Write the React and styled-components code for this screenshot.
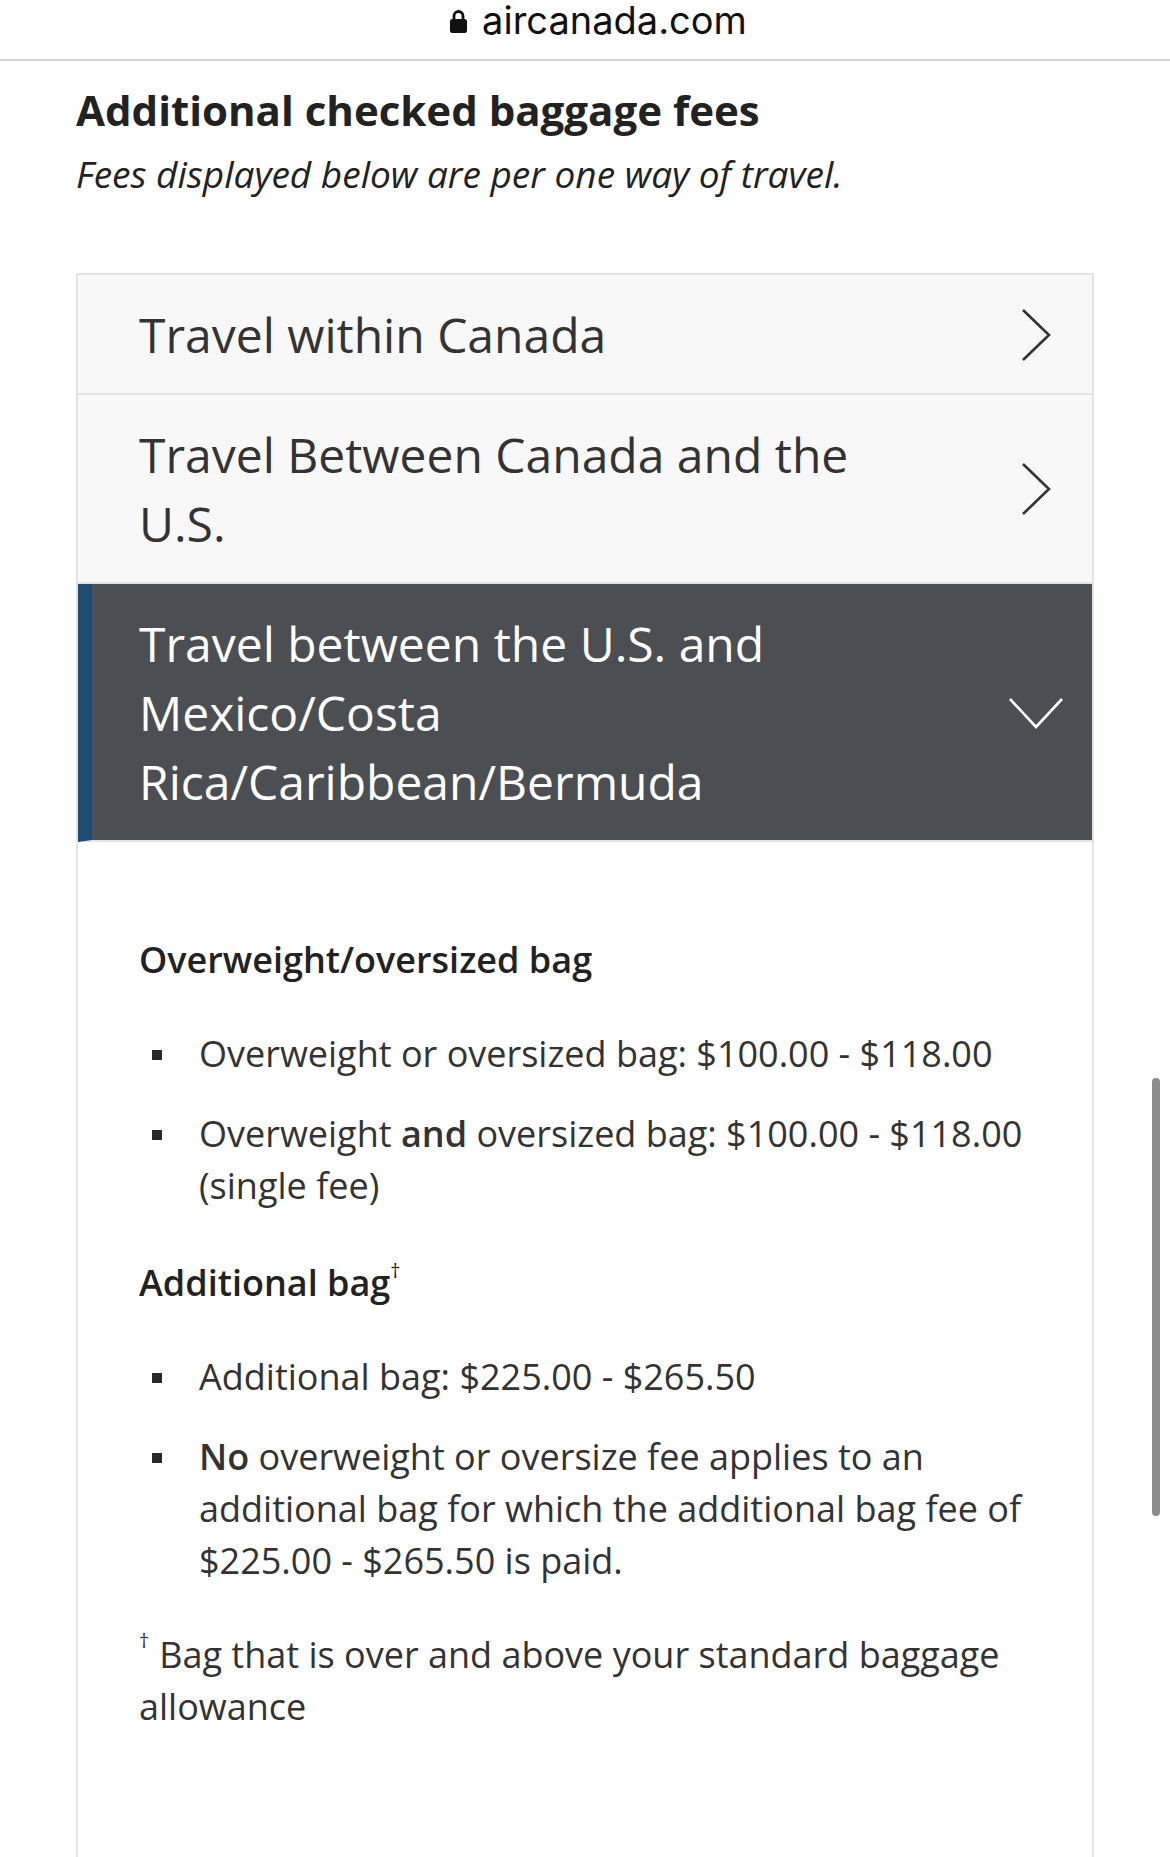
import styled, { createGlobalStyle } from 'styled-components';

const GlobalStyle = createGlobalStyle`
  html, body {
    margin: 0;
    padding: 0;
    background: #ffffff;
  }
  body {
    font-family: "Open Sans", "Liberation Sans", sans-serif;
    color: #333333;
  }
  * {
    box-sizing: border-box;
  }
`;

const AddressBar = styled.div`
  height: 61px;
  display: flex;
  justify-content: center;
  align-items: flex-start;
  gap: 14px;
  padding-left: 26px;
  border-bottom: 2px solid #d4d4d4;
  font-family: Inter, "Liberation Sans", sans-serif;
  font-size: 38px;
  line-height: 40px;
  color: #111111;
`;

const Lock = styled.svg`
  width: 19px;
  height: 24px;
  margin-top: 9px;
`;

const Main = styled.main`
  padding: 21px 76px 0 76px;
`;

const Title = styled.h1`
  margin: 0;
  font-size: 42px;
  line-height: 56px;
  font-weight: 700;
  color: #222222;
`;

const Subtitle = styled.p`
  margin: 12px 0 0 0;
  font-size: 37px;
  line-height: 48px;
  font-style: italic;
  color: #222222;
`;

const Accordion = styled.section`
  margin-top: 75px;
  width: 1018px;
  border: 2px solid #e3e3e3;
  border-bottom: none;
`;

const Header = styled.div`
  display: flex;
  align-items: center;
  justify-content: space-between;
  padding: 25px 40px 24px ${(p) => (p.$open ? 47 : 61)}px;
  background: ${(p) => (p.$open ? '#4b4e53' : '#f8f8f8')};
  color: ${(p) => (p.$open ? '#ffffff' : '#333333')};
  border-left: ${(p) => (p.$open ? '14px solid #1f4d72' : 'none')};
  border-bottom: 2px solid #e3e3e3;
`;

const HeaderText = styled.span`
  max-width: 760px;
  font-size: 48px;
  line-height: 69px;
`;

const Chevron = styled.svg`
  flex: none;
  width: ${(p) => (p.$down ? 56 : 32)}px;
  height: ${(p) => (p.$down ? 34 : 54)}px;
  margin-right: ${(p) => (p.$down ? -12 : 0)}px;
`;

const Panel = styled.div`
  background: #ffffff;
  padding: 92px 61px 126px 61px;
`;

const SubHeading = styled.h3`
  margin: 0;
  font-size: 36px;
  line-height: 52px;
  font-weight: 600;
  color: #222222;

  & sup {
    font-size: 20px;
    font-weight: 400;
    line-height: 0;
    vertical-align: 18px;
  }
`;

const List = styled.ul`
  list-style: none;
  margin: 42px 0 ${(p) => p.$after}px 0;
  padding: 0;
  display: flex;
  flex-direction: column;
  gap: 28px;
`;

const Item = styled.li`
  display: flex;
  align-items: flex-start;
  font-size: 36px;
  line-height: 52px;

  &::before {
    content: '';
    flex: none;
    width: 10px;
    height: 10px;
    margin: 22px 37px 0 13px;
    background: #2a2a2a;
  }

  & strong {
    font-weight: 600;
  }
`;

const Footnote = styled.p`
  margin: 0;
  font-size: 36px;
  line-height: 52px;

  & sup {
    font-size: 20px;
    line-height: 0;
    vertical-align: 20px;
    margin-right: 10px;
  }
`;

const Scrollbar = styled.div`
  position: absolute;
  left: 1152px;
  top: 1078px;
  width: 8px;
  height: 438px;
  border-radius: 4px;
  background: #8c8c8c;
`;

const sections = [
  { title: 'Travel within Canada', open: false },
  { title: 'Travel Between Canada and the U.S.', open: false },
  { title: 'Travel between the U.S. and Mexico/Costa Rica/Caribbean/Bermuda', open: true },
];

const RightArrow = () => (
  <Chevron viewBox="0 0 32 54">
    <polyline points="3,2 29,27 3,52" fill="none" stroke="#333" strokeWidth="2.6" strokeLinejoin="miter" />
  </Chevron>
);

const DownArrow = () => (
  <Chevron $down viewBox="0 0 56 34">
    <polyline points="2,3 28,31 54,3" fill="none" stroke="#fff" strokeWidth="2.6" />
  </Chevron>
);

export default function App() {
  return (
    <>
      <GlobalStyle />
      <AddressBar>
        <Lock viewBox="0 0 19 24">
          <path d="M5 11V7a4.5 4.5 0 0 1 9 0v4" fill="none" stroke="#111" strokeWidth="2.8" />
          <rect x="1" y="10" width="17" height="14" rx="2.5" fill="#111" />
        </Lock>
        <span>aircanada.com</span>
      </AddressBar>
      <Main>
        <Title>Additional checked baggage fees</Title>
        <Subtitle>Fees displayed below are per one way of travel.</Subtitle>
        <Accordion>
          {sections.map((s) => (
            <Header key={s.title} $open={s.open}>
              <HeaderText>{s.title}</HeaderText>
              {s.open ? <DownArrow /> : <RightArrow />}
            </Header>
          ))}
          <Panel>
            <SubHeading>Overweight/oversized bag</SubHeading>
            <List $after={45}>
              <Item>
                <span>Overweight or oversized bag: $100.00 - $118.00</span>
              </Item>
              <Item>
                <span>
                  Overweight <strong>and</strong> oversized bag: $100.00 - $118.00 (single fee)
                </span>
              </Item>
            </List>
            <SubHeading>
              Additional bag<sup>†</sup>
            </SubHeading>
            <List $after={42}>
              <Item>
                <span>Additional bag: $225.00 - $265.50</span>
              </Item>
              <Item>
                <span>
                  <strong>No</strong> overweight or oversize fee applies to an additional bag for which the
                  additional bag fee of $225.00 - $265.50 is paid.
                </span>
              </Item>
            </List>
            <Footnote>
              <sup>†</sup>Bag that is over and above your standard baggage allowance
            </Footnote>
          </Panel>
        </Accordion>
      </Main>
      <Scrollbar />
    </>
  );
}
